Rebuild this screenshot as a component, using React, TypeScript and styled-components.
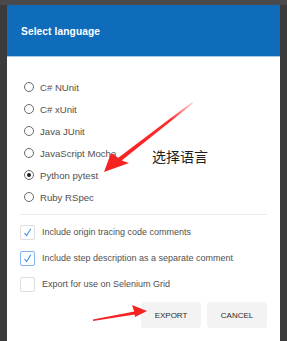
import React from "react";
import styled, { createGlobalStyle } from "styled-components";

const Global = createGlobalStyle`
  html, body { margin: 0; padding: 0; }
  body {
    width: 287px; height: 341px; overflow: hidden;
    background: #3d3d3d;
    font-family: "Liberation Sans", Arial, sans-serif;
  }
`;

const Page = styled.div`
  position: relative;
  width: 287px;
  height: 341px;
  padding: 5px 0 0 7px;
  box-sizing: border-box;
  background: linear-gradient(#4a4a4a 0, #4a4a4a 5px, #3b3b3b 5px);
`;

const Dialog = styled.div`
  width: 273px;
  height: 336px;
  background: #ffffff;
  display: flex;
  flex-direction: column;
`;

const Header = styled.div`
  height: 50px;
  background: #0e6cbb;
  border-bottom: 1px solid #a8c8e8;
  display: flex;
  align-items: center;
  padding: 1px 0 0 14px;
  color: #fff;
  font-weight: bold;
  font-size: 10.2px;
  letter-spacing: 0.1px;
`;

const Body = styled.div`
  display: flex;
  flex-direction: column;
  padding: 19px 13px 0 13px;
`;

const RadioRow = styled.label`
  height: 22px;
  display: flex;
  align-items: center;
  font-size: 9.6px;
  color: #505050;
`;

const RadioCircle = styled.span<{ $checked?: boolean }>`
  width: 8px;
  height: 8px;
  border: 1px solid #6a6a6a;
  border-radius: 50%;
  margin: 0 6px 0 4px;
  display: flex;
  align-items: center;
  justify-content: center;
  &::after {
    content: "";
    width: 4px;
    height: 4px;
    border-radius: 50%;
    background: ${(p) => (p.$checked ? "#222" : "transparent")};
  }
`;

const Divider = styled.div`
  height: 1px;
  background: #ececec;
  margin: 6px 0 4px 0;
`;

const CheckRow = styled.label`
  height: 26px;
  display: flex;
  align-items: center;
  font-size: 9px;
  color: #505050;
`;

const CheckBox = styled.span<{ $focus?: boolean }>`
  width: 13px;
  height: 13px;
  border: 1px solid ${(p) => (p.$focus ? "#86b4ee" : "#dedede")};
  border-radius: 2px;
  margin-right: 7px;
  display: flex;
  align-items: center;
  justify-content: center;
`;

const Footer = styled.div`
  display: flex;
  justify-content: flex-end;
  gap: 6px;
  margin-top: 5px;
`;

const Button = styled.button`
  width: 60px;
  height: 26px;
  border: none;
  border-radius: 3px;
  background: #f3f3f3;
  color: #2a2a2a;
  font-family: "Liberation Sans", Arial, sans-serif;
  font-size: 8px;
  padding: 0;
`;

const Note = styled.div`
  position: absolute;
  left: 152px;
  top: 148px;
  font-family: "Noto Sans CJK SC", sans-serif;
  font-size: 14px;
  line-height: 16px;
  color: #1e1e1e;
`;

const Overlay = styled.svg`
  position: absolute;
  left: 0;
  top: 0;
  pointer-events: none;
`;

const Check = () => (
  <svg width="11" height="11" viewBox="0 0 11 11">
    <path d="M2.5 6 L4.6 8.6 L8.8 1.8" fill="none" stroke="#3d8fe8" strokeWidth="1.1" />
  </svg>
);

const langs = ["C# NUnit", "C# xUnit", "Java JUnit", "JavaScript Mocha", "Python pytest", "Ruby RSpec"];
const opts = [
  { t: "Include origin tracing code comments", c: true, f: false },
  { t: "Include step description as a separate comment", c: true, f: true },
  { t: "Export for use on Selenium Grid", c: false, f: false },
];

export default function App() {
  return (
    <>
      <Global />
      <Page>
        <Dialog>
          <Header>Select language</Header>
          <Body>
            {langs.map((l) => (
              <RadioRow key={l}>
                <RadioCircle $checked={l === "Python pytest"} />
                {l}
              </RadioRow>
            ))}
            <Divider />
            {opts.map((o) => (
              <CheckRow key={o.t}>
                <CheckBox $focus={o.f}>{o.c && <Check />}</CheckBox>
                {o.t}
              </CheckRow>
            ))}
            <Footer>
              <Button>EXPORT</Button>
              <Button>CANCEL</Button>
            </Footer>
          </Body>
        </Dialog>
        <Note>选择语言</Note>
        <Overlay width="287" height="341" viewBox="0 0 287 341">
          <defs>
            <linearGradient id="fade" x1="192" y1="102" x2="105" y2="170" gradientUnits="userSpaceOnUse">
              <stop offset="0" stopColor="#ff4040" stopOpacity="0.2" />
              <stop offset="0.25" stopColor="#ff2a2a" />
              <stop offset="1" stopColor="#f52020" />
            </linearGradient>
          </defs>
          <polygon points="192,102 193,103.5 121,161 118,158" fill="url(#fade)" />
          <polygon points="104,172 111,153 117,157 123,161 129,163" fill="#f52222" />
          <polygon points="93,321 93,319.5 137,311 138,314" fill="#f52222" />
          <polygon points="147,311 132,305 134,311 135,317" fill="#f52222" />
        </Overlay>
      </Page>
    </>
  );
}
